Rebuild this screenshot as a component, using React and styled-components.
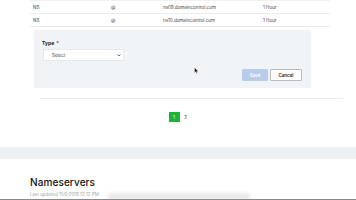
import React from 'react';
import styled, { createGlobalStyle } from 'styled-components';

const GlobalStyle = createGlobalStyle`
    html, body {
        margin: 0;
        padding: 0;
        background: #fff;
        font-family: Inter, "Open Sans", Arial, sans-serif;
        color: #111;
        overflow: hidden;
    }
`;

const Page = styled.div`
    position: relative;
    width: 356px;
    height: 200px;
    overflow: hidden;
    box-sizing: border-box;
    border-bottom: 1px solid #8a8a8a;
`;

const Table = styled.div`
    margin: 0 26px 0 30px;
    border-top: 1px solid #f2f2f2;
`;

const Row = styled.div`
    display: grid;
    grid-template-columns: 78px 52px 100px 1fr;
    align-items: center;
    height: 12px;
    padding-left: 3px;
    border-bottom: 1px solid #ececec;
    font-size: 4.5px;
    color: #444;
`;

const Panel = styled.div`
    margin: 3px 45px 0 34px;
    height: 58px;
    background: #f1f4f6;
    box-sizing: border-box;
    padding: 10px 9px 0 8px;
    display: flex;
    flex-direction: column;
`;

const Label = styled.div`
    font-size: 5px;
    font-weight: 700;
    color: #222;
    span {
        color: #d0021b;
        margin-left: 2px;
    }
`;

const Select = styled.div`
    margin-top: 3px;
    margin-left: 1px;
    width: 81px;
    height: 12px;
    box-sizing: border-box;
    background: #fff;
    border: 1px solid #e6e8ea;
    display: flex;
    align-items: center;
    justify-content: space-between;
    padding: 0 2px 0 8px;
    font-size: 4.5px;
    color: #444;
`;

const Actions = styled.div`
    display: flex;
    justify-content: flex-end;
    gap: 2px;
    margin-top: 8px;
`;

const Button = styled.div`
    height: 12px;
    width: ${p => p.$w}px;
    box-sizing: border-box;
    display: flex;
    align-items: center;
    justify-content: center;
    font-size: 4.5px;
    font-weight: 600;
    border-radius: 1px;
    background: ${p => (p.$primary ? '#b7cdea' : '#fff')};
    color: ${p => (p.$primary ? '#fff' : '#222')};
    border: 1px solid ${p => (p.$primary ? '#b7cdea' : '#b9bcbf')};
`;

const Divider = styled.div`
    margin: 10px 13px 0 40px;
    border-top: 1px solid #ececec;
`;

const Pager = styled.div`
    display: flex;
    justify-content: center;
    align-items: center;
    gap: 4px;
    margin-top: 13px;
`;

const PageNum = styled.div`
    width: ${p => (p.$active ? 11 : 4)}px;
    height: 10px;
    display: flex;
    align-items: center;
    justify-content: center;
    font-size: 4.5px;
    background: ${p => (p.$active ? '#1bb43a' : 'transparent')};
    color: ${p => (p.$active ? '#fff' : '#333')};
`;

const Band = styled.div`
    margin-top: 25px;
    height: 12px;
    background: #eef1f3;
`;

const Section = styled.div`
    padding: 17px 30px 0;
`;

const Heading = styled.div`
    font-size: 10px;
    font-weight: 500;
    color: #111;
    letter-spacing: 0.1px;
`;

const Sub = styled.div`
    margin-top: 4px;
    font-size: 4.5px;
    color: #a5a5a5;
`;

const Blur = styled.div`
    position: absolute;
    left: 108px;
    bottom: 0;
    width: 142px;
    height: 7px;
    border-radius: 4px 4px 0 0;
    background: linear-gradient(#f4f4f4, #e2e2e2);
    filter: blur(1.5px);
`;

const Cursor = styled.svg`
    position: absolute;
    left: 194px;
    top: 67px;
`;

const rows = [
    ['NS', '@', 'ns09.domaincontrol.com', '1 Hour'],
    ['NS', '@', 'ns10.domaincontrol.com', '1 Hour'],
];

export default function App() {
    return (
        <>
            <GlobalStyle />
            <Page>
                <Table>
                    {rows.map((r, i) => (
                        <Row key={i}>
                            {r.map((c, j) => <div key={j}>{c}</div>)}
                        </Row>
                    ))}
                </Table>
                <Panel>
                    <Label>Type<span>*</span></Label>
                    <Select>
                        <span>Select</span>
                        <svg width="4" height="3" viewBox="0 0 4 3">
                            <path d="M0.5 0.5 L2 2 L3.5 0.5" fill="none" stroke="#333" strokeWidth="0.7" />
                        </svg>
                    </Select>
                    <Actions>
                        <Button $primary $w={26}>Save</Button>
                        <Button $w={32}>Cancel</Button>
                    </Actions>
                </Panel>
                <Divider />
                <Pager>
                    <PageNum $active>1</PageNum>
                    <PageNum>2</PageNum>
                </Pager>
                <Band />
                <Section>
                    <Heading>Nameservers</Heading>
                    <Sub>Last updated 11/6/2019 12:12 PM</Sub>
                </Section>
                <Blur />
                <Cursor width="5" height="7" viewBox="0 0 5 7">
                    <path d="M0.5 0.5 L0.5 6 L1.8 4.8 L2.8 6.6 L3.5 6.2 L2.6 4.5 L4.3 4.4 Z" fill="#111" stroke="#fff" strokeWidth="0.4" />
                </Cursor>
            </Page>
        </>
    );
}
